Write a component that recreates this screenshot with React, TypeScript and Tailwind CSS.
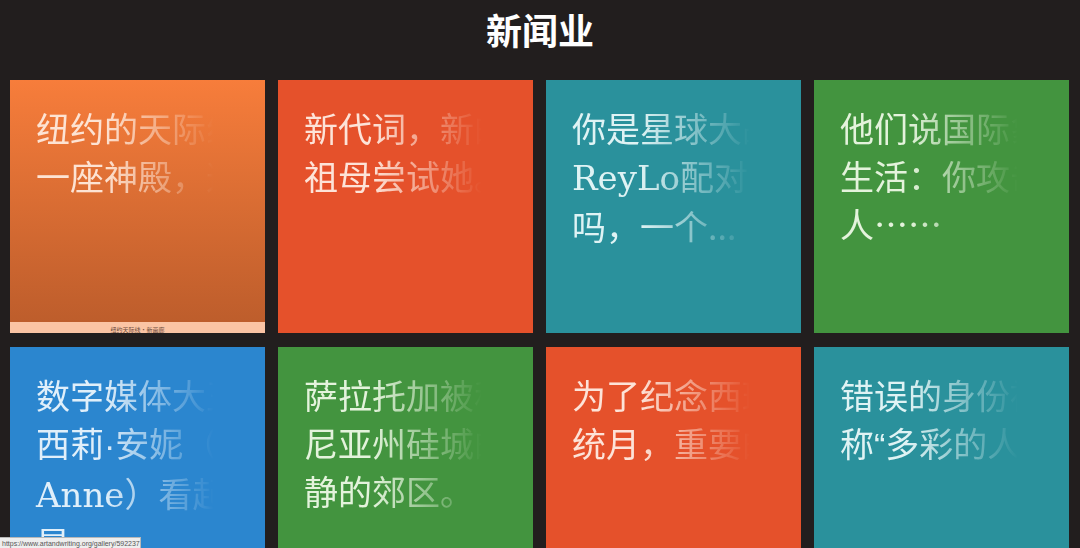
import type { ReactNode } from 'react';

interface Tile {
  bg: string;
  text: string;
  lines: ReactNode[];
  caption?: boolean;
}

const serif = (s: string) => (
  <span className="font-['DejaVu_Serif','Liberation_Serif',serif]">{s}</span>
);
const latin = (s: string) => (
  <span className="font-['Liberation_Sans',sans-serif]">{s}</span>
);

const TILES: Tile[] = [
  {
    bg: 'bg-gradient-to-b from-[#f77d3b] to-[#bb5c2b]',
    text: 'text-[#fde3d3]',
    lines: ['纽约的天际线', '一座神殿，这'],
    caption: true,
  },
  {
    bg: 'bg-[#e5512b]',
    text: 'text-[#fde3d8]',
    lines: ['新代词，新的', '祖母尝试她。'],
  },
  {
    bg: 'bg-[#2a919c]',
    text: 'text-[#dff3f4]',
    lines: ['你是星球大战', <>{serif('ReyLo')}配对的</>, '吗，一个...'],
  },
  {
    bg: 'bg-[#43943f]',
    text: 'text-[#e4f3dc]',
    lines: ['他们说国际象', '生活：你攻击', '人……'],
  },
  {
    bg: 'bg-[#2b86cf]',
    text: 'text-[#e0effa]',
    lines: ['数字媒体大王', <>西莉{latin('·')}安妮（</>, <>{serif('Anne')}）看起</>, '是'],
  },
  {
    bg: 'bg-[#43943f]',
    text: 'text-[#e4f3dc]',
    lines: ['萨拉托加被称', '尼亚州硅城的', '静的郊区。'],
  },
  {
    bg: 'bg-[#e5512b]',
    text: 'text-[#fde3d8]',
    lines: ['为了纪念西班', '统月，重要的'],
  },
  {
    bg: 'bg-[#2a919c]',
    text: 'text-[#dff3f4]',
    lines: ['错误的身份被', <>称{latin('“')}多彩的人</>],
  },
];

function NewsTile({ tile }: { tile: Tile }) {
  return (
    <div className={`relative flex h-[253px] flex-col ${tile.bg}`}>
      <div className="w-[204px] overflow-hidden pl-[26px] pt-[24px] [mask-image:linear-gradient(to_right,#000_0%,#000_46%,transparent_100%)]">
        <div
          className={`w-[240px] text-[34px] leading-[48px] ${tile.text} font-['Noto_Sans_CJK_SC',sans-serif]`}
        >
          {tile.lines.map((line, i) => (
            <div key={i} className="whitespace-nowrap">
              {line}
            </div>
          ))}
        </div>
      </div>
      {tile.caption && (
        <div className="mt-auto flex h-[11px] items-end justify-center bg-[#fbc4a4] text-[6px] leading-[7px] text-[#6b4a3a] font-['Noto_Sans_CJK_SC',sans-serif]">
          纽约天际线·新画廊
        </div>
      )}
    </div>
  );
}

export default function App() {
  return (
    <div className="relative h-[548px] w-[1080px] overflow-hidden bg-[#221e1e]">
      <header className="flex h-[80px] justify-center">
        <h1 className="text-[36px] font-bold leading-[58px] text-white font-['Noto_Sans_CJK_SC',sans-serif]">
          新闻业
        </h1>
      </header>
      <div className="grid grid-cols-[repeat(4,255px)] gap-x-[13px] gap-y-[14px] pl-[10px]">
        {TILES.map((tile, i) => (
          <NewsTile key={i} tile={tile} />
        ))}
      </div>
      <div className="absolute bottom-0 left-0 flex h-[11px] w-[141px] items-center border-t border-r border-[#b8b8b8] bg-[#eeeeee] px-[2px] text-[7px] leading-none text-[#555] font-['Liberation_Sans',sans-serif]">
        https://www.artandwriting.org/gallery/592237
      </div>
    </div>
  );
}
